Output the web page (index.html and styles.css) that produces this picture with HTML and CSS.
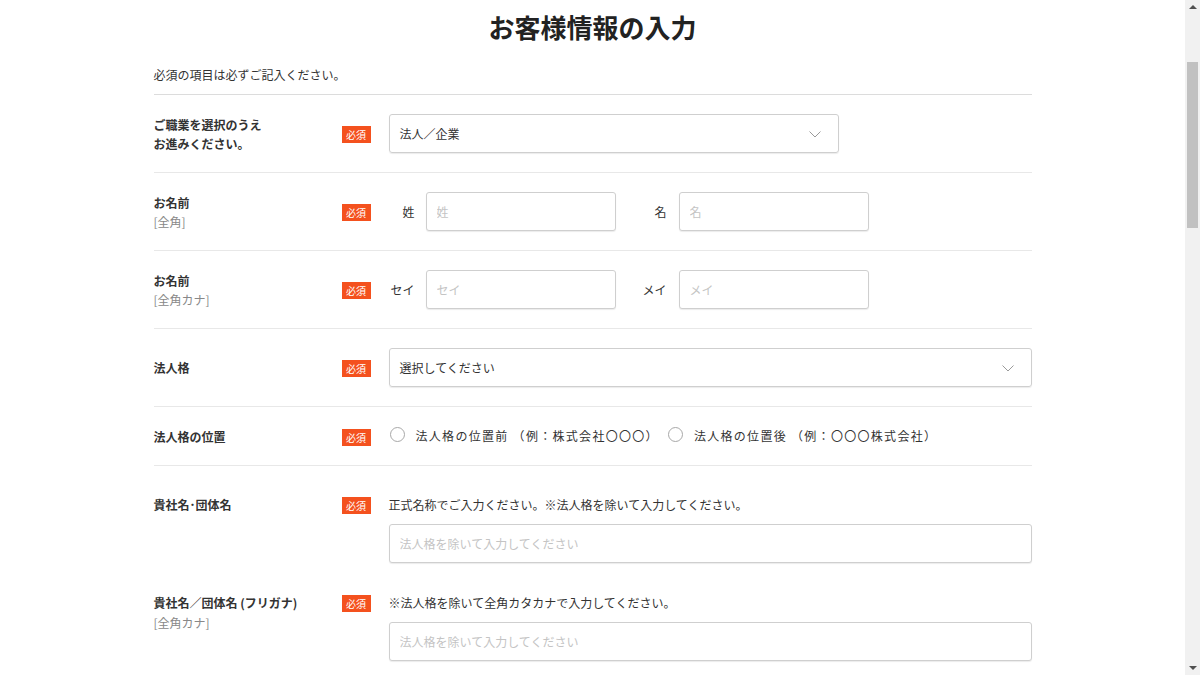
FILE: index.html
```html
<!DOCTYPE html>
<html lang="ja">
<head>
  <meta charset="UTF-8">
  <title>お客様情報の入力</title>
  <link rel="stylesheet" href="styles.css">
</head>
<body>

<div class="scrollbar">
  <span class="arrow up"></span>
  <div class="thumb"></div>
  <span class="arrow down"></span>
</div>

<div class="container">
  <h1>お客様情報の入力</h1>
  <p class="note">必須の項目は必ずご記入ください。</p>

  <form class="entry">
    <div class="row">
      <div class="label">ご職業を選択のうえ<br>お進みください。</div>
      <div><span class="req">必須</span></div>
      <div class="field">
        <div class="select short">法人／企業<svg class="chev" width="12" height="7" viewBox="0 0 12 7"><path d="M0.5 0.5 L6 6 L11.5 0.5" fill="none" stroke="#9a9a9a" stroke-width="1"/></svg></div>
      </div>
    </div>

    <div class="row">
      <div class="label">お名前<span class="sub">[全角]</span></div>
      <div><span class="req">必須</span></div>
      <div class="field pair">
        <label class="pair-label">姓</label>
        <input class="text half" placeholder="姓">
        <label class="pair-label second">名</label>
        <input class="text half" placeholder="名">
      </div>
    </div>

    <div class="row">
      <div class="label">お名前<span class="sub">[全角カナ]</span></div>
      <div><span class="req">必須</span></div>
      <div class="field pair">
        <label class="pair-label">セイ</label>
        <input class="text half" placeholder="セイ">
        <label class="pair-label second">メイ</label>
        <input class="text half" placeholder="メイ">
      </div>
    </div>

    <div class="row">
      <div class="label">法人格</div>
      <div><span class="req">必須</span></div>
      <div class="field">
        <div class="select">選択してください<svg class="chev" width="12" height="7" viewBox="0 0 12 7"><path d="M0.5 0.5 L6 6 L11.5 0.5" fill="none" stroke="#9a9a9a" stroke-width="1"/></svg></div>
      </div>
    </div>

    <div class="row">
      <div class="label">法人格の位置</div>
      <div><span class="req">必須</span></div>
      <div class="field radios">
        <label class="radio"><span class="dot"></span>法人格の位置前 （例：株式会社〇〇〇）</label>
        <label class="radio"><span class="dot"></span>法人格の位置後 （例：〇〇〇株式会社）</label>
      </div>
    </div>

    <div class="row top">
      <div class="label">貴社名･団体名</div>
      <div><span class="req">必須</span></div>
      <div class="field">
        <p class="hint">正式名称でご入力ください。※法人格を除いて入力してください。</p>
        <input class="text full" placeholder="法人格を除いて入力してください">
      </div>
    </div>

    <div class="row top">
      <div class="label">貴社名／団体名 (フリガナ)<span class="sub">[全角カナ]</span></div>
      <div><span class="req">必須</span></div>
      <div class="field">
        <p class="hint">※法人格を除いて全角カタカナで入力してください。</p>
        <input class="text full" placeholder="法人格を除いて入力してください">
      </div>
    </div>

    <div class="row top">
      <div class="label">部署名</div>
      <div></div>
      <div class="field">
        <input class="text full" placeholder="部署名">
      </div>
    </div>

    <div class="row top">
      <div class="label">郵便番号<span class="sub">[半角数字]</span></div>
      <div><span class="req">必須</span></div>
      <div class="field">
        <input class="text half" placeholder="1234567">
      </div>
    </div>

    <div class="row top">
      <div class="label">電話番号<span class="sub">[半角数字]</span></div>
      <div><span class="req">必須</span></div>
      <div class="field">
        <input class="text half" placeholder="0312345678">
      </div>
    </div>

    <div class="actions">
      <button type="button" class="next">確認画面へ進む</button>
    </div>
  </form>
</div>

</body>
</html>
```

FILE: styles.css
```css
html, body {
  height: 100%;
}
body {
  margin: 0;
  padding-right: 15px;
  font-family: "Noto Sans CJK JP", "Noto Sans", sans-serif;
  color: #333;
  background: #fff;
  font-size: 12px;
  overflow: hidden;
}

/* window scrollbar */
.scrollbar {
  position: fixed;
  top: 0;
  right: 0;
  width: 15px;
  height: 100%;
  background: #f1f1f1;
}
.thumb {
  position: absolute;
  top: 62px;
  left: 2px;
  width: 11px;
  height: 166px;
  background: #c1c1c1;
}
.arrow {
  position: absolute;
  left: 4px;
  width: 0;
  height: 0;
  border-left: 4px solid transparent;
  border-right: 4px solid transparent;
}
.arrow.up {
  top: 5px;
  border-bottom: 4px solid #505050;
}
.arrow.down {
  bottom: 5px;
  border-top: 4px solid #505050;
}

.container {
  width: 878px;
  margin: 0 auto;
  padding: 9px 0 0;
}
h1 {
  margin: 0;
  font-size: 26px;
  line-height: 36px;
  font-weight: bold;
  text-align: center;
  color: #222;
}
.note {
  margin: 20px 0 0;
  line-height: 20px;
  padding-bottom: 9px;
  border-bottom: 1px solid #dcdcdc;
}
.row {
  display: grid;
  grid-template-columns: 188px 47px 1fr;
  align-items: center;
  padding: 19px 0;
  border-bottom: 1px solid #e8e8e8;
}
.row.top {
  align-items: start;
  padding: 29px 0 0;
  margin-bottom: 1px;
  border-bottom: none;
}
.label {
  font-weight: bold;
  line-height: 19px;
  color: #333;
}
.row.top .label {
  line-height: 20px;
}
.sub {
  display: block;
  font-weight: normal;
  color: #888;
}
.req {
  display: inline-block;
  width: 29px;
  height: 17px;
  line-height: 17px;
  text-align: center;
  font-size: 10px;
  color: #fff;
  background: #f4511e;
  vertical-align: middle;
}
.row.top .req {
  margin-top: 2px;
  vertical-align: top;
}
.select {
  position: relative;
  height: 39px;
  box-sizing: border-box;
  border: 1px solid #cfcfcf;
  border-radius: 3px;
  box-shadow: 0 1px 1px rgba(0, 0, 0, 0.08);
  padding: 0 10px;
  line-height: 37px;
  color: #333;
}
.select.short {
  width: 450px;
}
.chev {
  position: absolute;
  right: 17px;
  top: 16px;
}
.pair {
  display: flex;
  align-items: center;
}
.pair-label {
  width: 26px;
  text-align: right;
  margin-right: 11px;
}
.pair-label.second {
  width: 38px;
  margin-left: 13px;
  margin-right: 12px;
}
.text {
  height: 39px;
  box-sizing: border-box;
  border: 1px solid #cfcfcf;
  border-radius: 3px;
  box-shadow: 0 1px 1px rgba(0, 0, 0, 0.08);
  padding: 0 10px;
  font-family: inherit;
  font-size: 12px;
  color: #333;
  background: #fff;
  margin: 0;
}
.text::placeholder {
  color: #c4c4c4;
}
.text.half {
  width: 190px;
}
.text.full {
  display: block;
  width: 100%;
}
.radios {
  display: flex;
  align-items: center;
  line-height: 20px;
  letter-spacing: 1.3px;
}
.radio {
  display: flex;
  align-items: center;
  margin-right: 8px;
}
.dot {
  width: 13px;
  height: 13px;
  border: 1px solid #a8a8a8;
  border-radius: 50%;
  margin: -4px 11px 0 1px;
  background: #fff;
}
.hint {
  margin: 0 0 9px;
  line-height: 20px;
}
.actions {
  padding: 50px 0 0;
  text-align: center;
}
.next {
  padding: 14px 60px;
  font-family: inherit;
  font-size: 15px;
  font-weight: bold;
  border: none;
  border-radius: 4px;
  background: #f4511e;
  color: #fff;
}
```
